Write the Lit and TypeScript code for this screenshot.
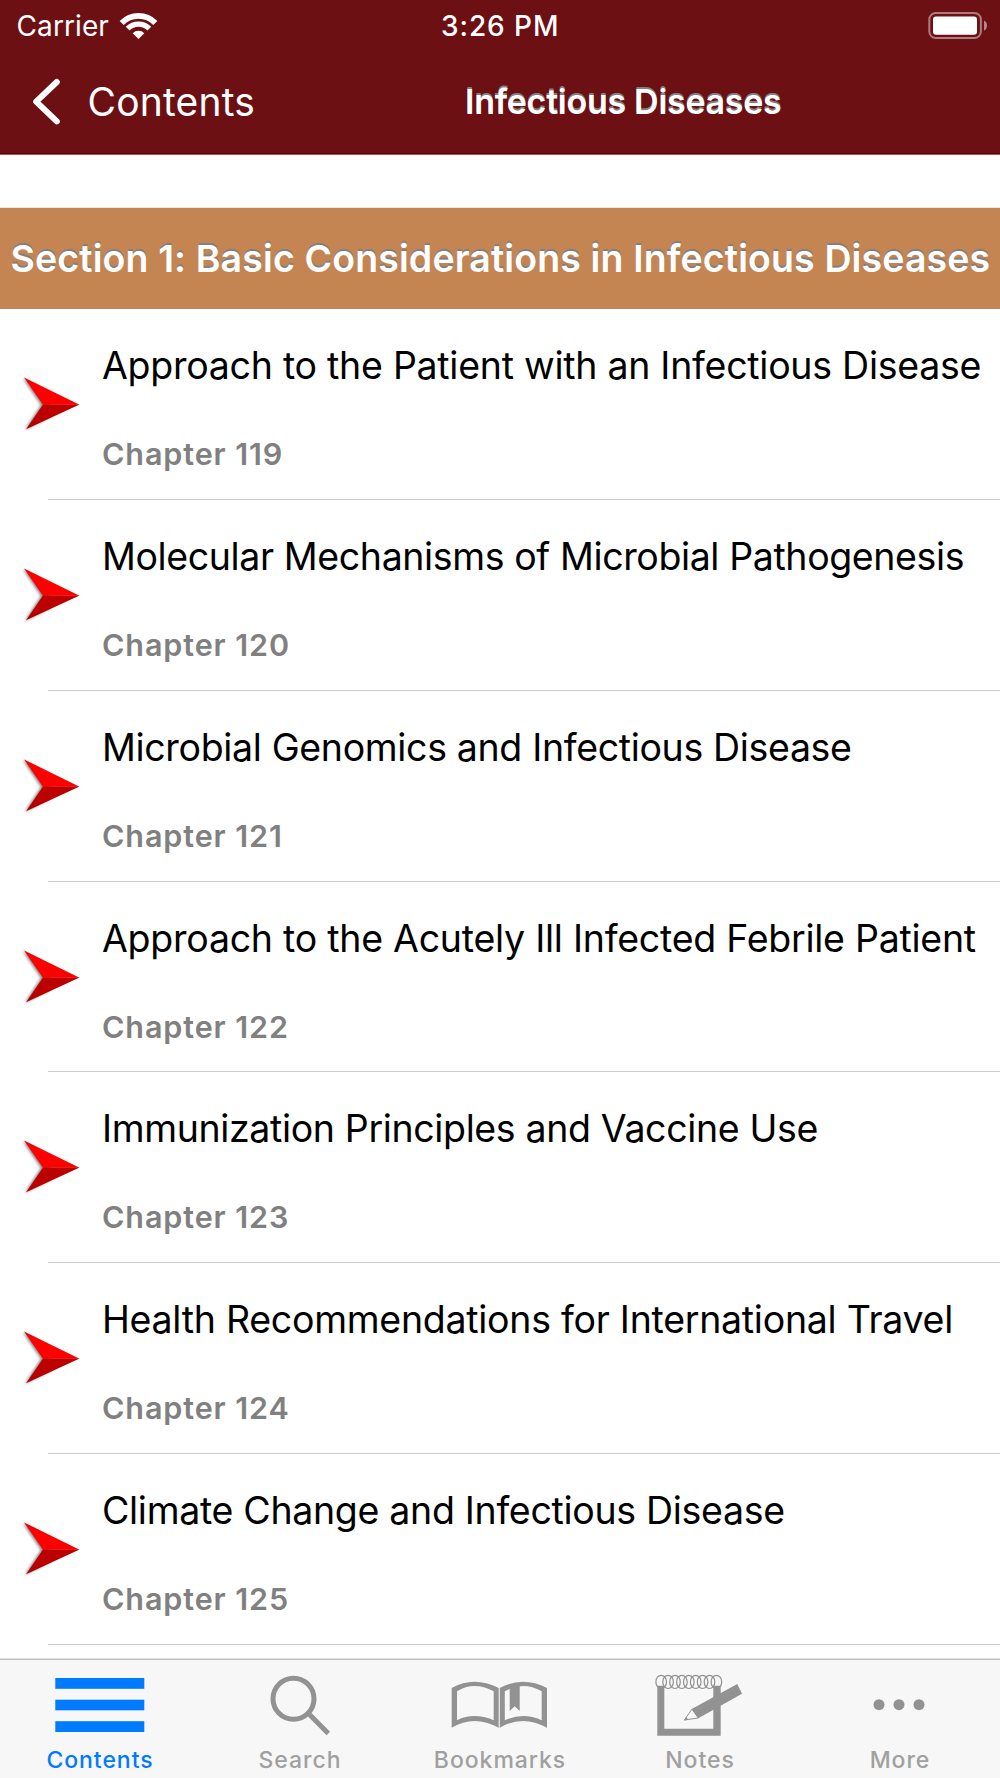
import { LitElement, html, svg, css } from "lit";
import { customElement } from "lit/decorators.js";

interface Chapter {
  title: string;
  number: number;
  tracking: number;
}

const CHAPTERS: Chapter[] = [
  { title: "Approach to the Patient with an Infectious Disease", number: 119, tracking: -0.265 },
  { title: "Molecular Mechanisms of Microbial Pathogenesis", number: 120, tracking: -0.385 },
  { title: "Microbial Genomics and Infectious Disease", number: 121, tracking: -0.34 },
  { title: "Approach to the Acutely Ill Infected Febrile Patient", number: 122, tracking: -0.253 },
  { title: "Immunization Principles and Vaccine Use", number: 123, tracking: -0.36 },
  { title: "Health Recommendations for International Travel", number: 124, tracking: -0.27 },
  { title: "Climate Change and Infectious Disease", number: 125, tracking: -0.31 },
];

const RINGS = Array.from({ length: 9 }, (_, i) => 61.2 + i * 6.9);

const TABS = [
  {
    label: "Contents",
    icon: svg`
      <rect x="55.3" y="18" width="89" height="10.8"/>
      <rect x="55.3" y="39.7" width="89" height="10.6"/>
      <rect x="55.3" y="61.2" width="89" height="10.8"/>`,
  },
  {
    label: "Search",
    icon: svg`
      <g fill="none" stroke="currentColor" stroke-width="5">
        <circle cx="93.5" cy="38.7" r="20.5"/>
        <path d="M108 53L128.3 73.4"/>
      </g>`,
  },
  {
    label: "Bookmarks",
    icon: svg`
      <path fill-rule="evenodd" d="M51.7 28Q74 15.5 98.7 28V67.8Q74 54 51.7 67.8ZM57 31.3Q74 20.5 93.7 31.3V60.2Q74 52 57 60.2Z"/>
      <path fill-rule="evenodd" d="M99.8 28Q123 15.5 147 28V67.8Q123 54 99.8 67.8ZM104.8 31.3Q123 20.5 141.7 31.3V60.2Q123 52 104.8 60.2Z"/>
      <path d="M109.7 25H119.7V51L114.7 46.2L109.7 51Z"/>`,
  },
  {
    label: "Notes",
    icon: svg`
      <path d="M57.3 25.7H64.3V68.7H113.3V25.7H120.7V75.8H57.3Z"/>
      <g fill="none" stroke="currentColor" stroke-width="1.2">
        ${RINGS.map((cx) => svg`<ellipse cx=${cx} cy="21.9" rx="5.3" ry="6.6"/>`)}
      </g>
      <path d="M137.3 24L142 33.7L98.3 58.3L91.7 49Z"/>
      <path d="M91.9 49.2L84.4 60L98.2 58Z" fill="#f7f7f7" stroke="currentColor" stroke-width="1"/>
      <path d="M84 60.4L86.3 57L88.2 59.7Z"/>`,
  },
  {
    label: "More",
    icon: svg`
      <circle cx="79" cy="44.7" r="5.5"/>
      <circle cx="99" cy="44.7" r="5.5"/>
      <circle cx="119" cy="44.7" r="5.5"/>`,
  },
];

@customElement("app-root")
export class AppRoot extends LitElement {
  static styles = css`
    :host {
      display: flex;
      flex-direction: column;
      height: 1778px;
      overflow: hidden;
      background: #fff;
      font-family: Inter, "Liberation Sans", sans-serif;
      white-space: nowrap;
    }
    svg {
      display: block;
      flex: none;
    }
    .header {
      flex: none;
      box-sizing: border-box;
      height: 155px;
      background: #6d1014;
      border-bottom: 1px solid #a9595c;
      box-shadow: inset 0 -1px 0 #5c0006;
      color: #fff;
    }
    .status {
      display: grid;
      grid-template-columns: 1fr auto 1fr;
      align-items: center;
      height: 50px;
      padding: 0 12px 0 16.5px;
      font-size: 28px;
      line-height: 52px;
    }
    .carrier {
      display: flex;
      align-items: center;
      gap: 10px;
      letter-spacing: 0.1px;
    }
    .wifi {
      margin-top: -3px;
    }
    .time {
      font-weight: 500;
      letter-spacing: 0.95px;
      padding-right: 4px;
    }
    .battery {
      justify-self: end;
    }
    .nav {
      display: grid;
      grid-template-columns: 465px 1fr;
      height: 103px;
      line-height: 103px;
    }
    .back {
      display: flex;
      align-items: center;
      gap: 25.5px;
      padding-left: 32px;
      font-size: 39px;
      letter-spacing: 0.2px;
    }
    .title {
      font-size: 34px;
      font-weight: 600;
      letter-spacing: -0.28px;
      text-shadow: 0 -2px 0 #808080;
    }
    .content {
      flex: 1;
      min-height: 0;
      overflow: hidden;
      padding-top: 52px;
    }
    .section {
      box-sizing: border-box;
      height: 102px;
      border-top: 1px solid #f0e6df;
      background: #c58553;
      color: #fff;
      font-size: 37.5px;
      font-weight: 600;
      line-height: 102px;
      letter-spacing: 0.12px;
      padding-left: 10.5px;
      text-shadow: 0 -2px 0 #808080;
    }
    .row {
      display: flex;
      height: 190.86px;
    }
    .arrow {
      width: 48px;
      overflow: visible;
    }
    .cell {
      flex: 1;
      box-sizing: border-box;
      border-bottom: 1px solid #cdcdcf;
      padding: 32px 0 0 54px;
    }
    .name {
      font-size: 37.5px;
      line-height: 50px;
      color: #000;
    }
    .chapter {
      margin-top: 43px;
      font-size: 30.5px;
      font-weight: 600;
      line-height: 40px;
      letter-spacing: 0.9px;
      color: #808080;
    }
    .tabs {
      flex: none;
      box-sizing: border-box;
      display: grid;
      grid-template-columns: repeat(5, 200px);
      height: 120px;
      border-top: 1px solid #e2e2e2;
      box-shadow: inset 0 1px 0 #bdbdbd;
      background: #f7f7f7;
    }
    .tab {
      padding-top: 1px;
      color: #929292;
      fill: currentColor;
    }
    .label {
      color: #a0a0a0;
      font-size: 23px;
      font-weight: 500;
      line-height: 28px;
      letter-spacing: 0.95px;
      text-align: center;
    }
    .tab.active,
    .active .label {
      color: #007aff;
    }
  `;

  private renderRow(c: Chapter) {
    return html`
      <div class="row">
        <svg class="arrow" width="48" height="190" viewBox="0 0 48 190">
          <defs>
            <linearGradient id="upper" x1="0" y1="1" x2="0.45" y2="0">
              <stop offset="0.65" stop-color="#ff0000"/>
              <stop offset="1" stop-color="#d00000"/>
            </linearGradient>
            <linearGradient id="lower" x1="0" y1="0" x2="0.45" y2="1">
              <stop offset="0.6" stop-color="#bc0000"/>
              <stop offset="1" stop-color="#980000"/>
            </linearGradient>
            <filter id="soft" x="-20%" y="-20%" width="140%" height="140%">
              <feGaussianBlur stdDeviation="1.7"/>
            </filter>
          </defs>
          <path d="M22.8 69L41 96L24.8 121L50 108L50 84Z" fill="#000" opacity="0.5" filter="url(#soft)"/>
          <path d="M24 68.4L79.6 95.8H43Z" fill="url(#upper)"/>
          <path d="M26 120.2L79.6 95.6H43Z" fill="url(#lower)"/>
        </svg>
        <div class="cell">
          <div class="name" style="letter-spacing:${c.tracking}px">${c.title}</div>
          <div class="chapter">Chapter ${c.number}</div>
        </div>
      </div>
    `;
  }

  render() {
    return html`
      <div class="header">
        <div class="status">
          <div class="carrier">
            Carrier
            <svg class="wifi" width="40" height="30" viewBox="0 0 40 30">
              <g fill="none" stroke="#fff" stroke-width="5.8">
                <path d="M2.7 12.9A23.4 23.4 0 0 1 36.3 12.9"/>
                <path d="M8.7 18.7A15 15 0 0 1 30.3 18.7" stroke-width="5.4"/>
              </g>
              <path d="M19.5 29L13.7 23.2A8.2 8.2 0 0 1 25.3 23.2Z" fill="#fff"/>
            </svg>
          </div>
          <div class="time">3:26 PM</div>
          <svg class="battery" width="60" height="28" viewBox="0 0 60 28">
            <rect x="1.3" y="1" width="51.6" height="25" rx="6.5" fill="none" stroke="#fff" stroke-opacity="0.45" stroke-width="2"/>
            <rect x="5" y="4.4" width="44" height="18.4" rx="3" fill="#fff"/>
            <path d="M56 8.4Q59 10 59 13.6T56 18.8Z" fill="#fff" fill-opacity="0.5"/>
          </svg>
        </div>
        <div class="nav">
          <div class="back">
            <svg width="30" height="50" viewBox="0 0 30 50">
              <path d="M24.8 5L4.2 24.7L24.8 44.4" fill="none" stroke="#fff" stroke-width="6" stroke-linecap="round" stroke-linejoin="round"/>
            </svg>
            Contents
          </div>
          <div class="title">Infectious Diseases</div>
        </div>
      </div>
      <div class="content">
        <div class="section">Section 1: Basic Considerations in Infectious Diseases</div>
        ${CHAPTERS.map((c) => this.renderRow(c))}
      </div>
      <div class="tabs">
        ${TABS.map(
          (t, i) => html`
            <div class="tab ${i === 0 ? "active" : ""}">
              <svg width="200" height="86" viewBox="0 0 200 86">${t.icon}</svg>
              <div class="label">${t.label}</div>
            </div>
          `,
        )}
      </div>
    `;
  }
}
